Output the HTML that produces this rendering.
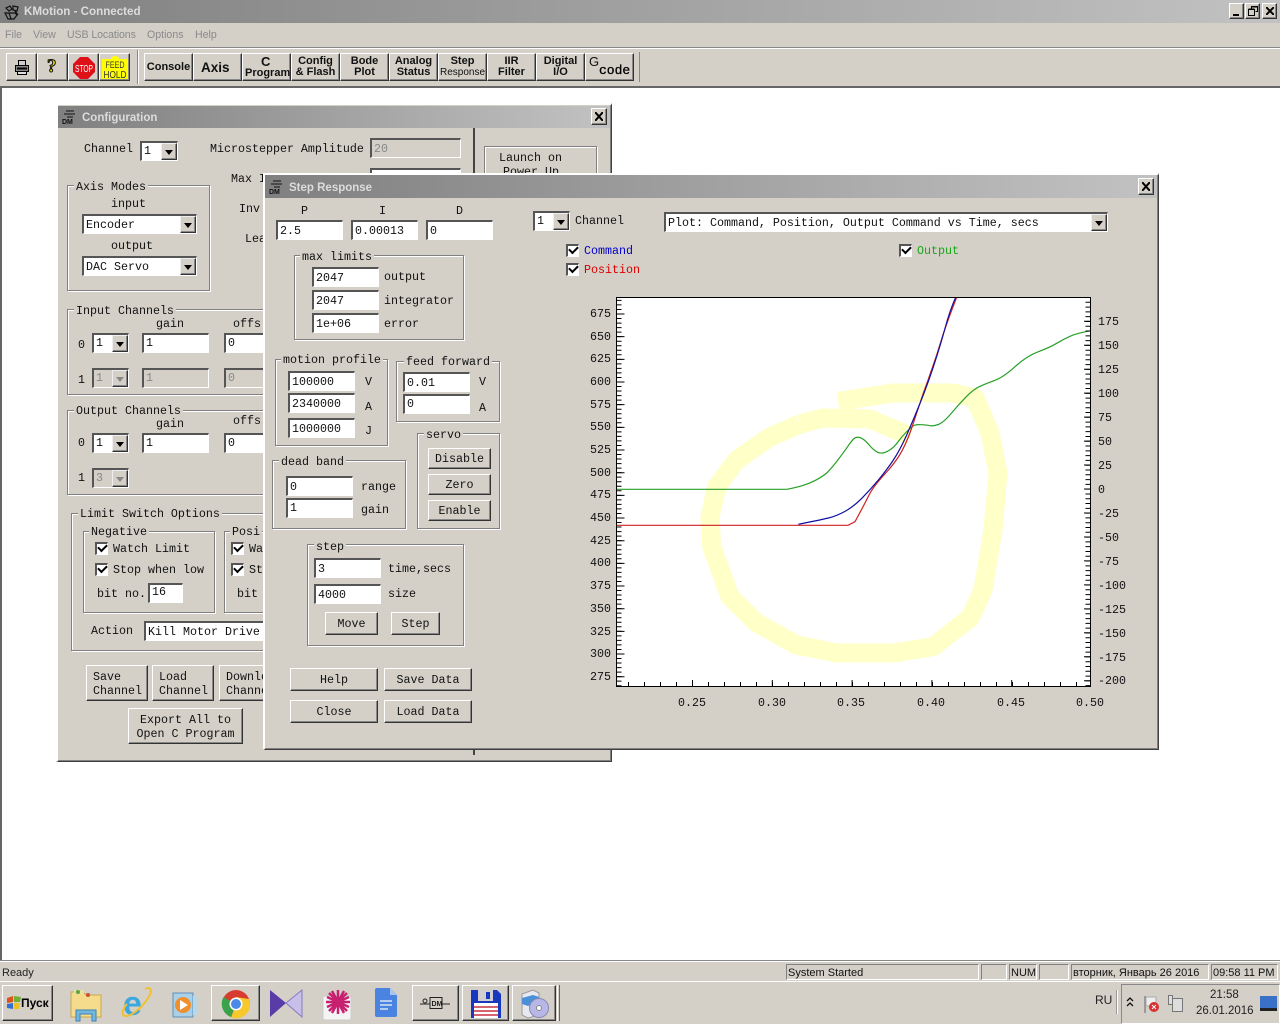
<!DOCTYPE html>
<html><head><meta charset="utf-8"><title>KMotion</title>
<style>
html,body{margin:0;padding:0}
body{width:1280px;height:1024px;position:relative;overflow:hidden;background:#d4d0c8;font:11.67px/14px "Liberation Mono","Courier New",monospace;color:#111}
*{box-sizing:border-box}
div,span,i,svg{position:absolute}
i{font-style:normal;white-space:pre}
.t{height:14px;margin-top:1px}
.e{background:#fff;border:solid;border-width:2px 1px 1px 2px;border-color:#555 #fff #fff #555;padding-left:2px;line-height:19px;white-space:pre;overflow:hidden}
.x{background:#d4d0c8;color:#888}
.c{background:#fff;border:solid;border-width:2px 1px 1px 2px;border-color:#555 #fff #fff #555;padding-left:2px;line-height:19px;white-space:pre}
.n{line-height:17px}
.c u{position:absolute;right:0;top:0;bottom:0;width:16px;background:#d4d0c8;border:1px solid;border-color:#eee #333 #333 #eee;box-shadow:inset -1px -1px #888}
.c u::after{content:"";position:absolute;left:3px;top:6px;border:4px solid transparent;border-top:5px solid #000;border-bottom:0}
.d{background:#d4d0c8;color:#888}
.d u::after{border-top-color:#888}
.b{background:#d4d0c8;border:1px solid;border-color:#fff #333 #333 #fff;box-shadow:inset -1px -1px #888;text-align:center;white-space:pre;display:flex;align-items:center;justify-content:center}
.g{border:1px solid #808080;box-shadow:1px 1px #fff,inset 1px 1px #fff}
.g>span{top:-7px;background:#d4d0c8;padding:0 2px;white-space:pre;line-height:14px}
.k{width:13px;height:13px;background:#fff;border:solid;border-width:2px 1px 1px 2px;border-color:#555 #fff #fff #555}
.k::after{content:"";position:absolute;left:1px;top:0px;width:7px;height:4px;border:solid #000;border-width:0 0 2px 2px;transform:rotate(-45deg)}
.w{background:#d4d0c8;border:solid;border-width:2px 1px 1px 2px;border-color:#fff #404040 #404040 #fff;box-shadow:inset -1px -1px #808080}
.tb{background:linear-gradient(90deg,#808080,#c2c2c2)}
.tt{font:bold 11.5px/14px "Liberation Sans",sans-serif;color:#dcdcdc;white-space:pre}
.q{font:bold 11px/11px "Liberation Sans",sans-serif;color:#111}
.s{background:#d4d0c8;border:1px solid;border-color:#808080 #fff #fff #808080;font:11px/16px "Liberation Sans",sans-serif;padding-left:1px;white-space:pre;color:#111}
.m{font:10.6px/14px "Liberation Sans",sans-serif;color:#8a8a8a}
.u{font:11.5px/14px "Liberation Sans",sans-serif;color:#222;white-space:pre}
.cl{background:#d4d0c8;border:1px solid;border-color:#fff #333 #333 #fff;box-shadow:inset -1px -1px #888}
.cl svg{left:3px;top:3px}
</style></head><body>

<!-- main title -->
<div class="tb" style="left:0;top:0;width:1280px;height:23px"></div>
<svg style="left:3px;top:3px" width="18" height="18" viewBox="0 0 18 18" fill="none" stroke="#111" stroke-width="1.200"><path d="M3 5l4-2 2 3-3 2zM10 3l5 1-1 4-4-1zM2 10h10l2 2-3 4H5zM6 10l2 6M12 8l3 4"/></svg>
<i class="tt" style="left:24px;top:5px;font-size:11.6px">KMotion - Connected</i>
<div class="cl" style="left:1229px;top:3px;width:15px;height:16px"><div style="left:3px;top:10px;width:6px;height:2px;background:#000"></div></div>
<div class="cl" style="left:1245px;top:3px;width:15px;height:16px"><svg style="left:2px;top:2px" width="10" height="10" fill="none" stroke="#000"><path d="M3.500 2.500V.5h6v5h-2M.5 3.500h6v6h-6zM.5 3h6M3.500 1h6"/></svg></div>
<div class="cl" style="left:1262px;top:3px;width:15px;height:16px"><svg width="8" height="8" stroke="#000" stroke-width="2"><path d="M0 0l8 8M8 0L0 8"/></svg></div>

<!-- menu -->
<i class="m" style="left:5px;top:28px">File</i>
<i class="m" style="left:33px;top:28px">View</i>
<i class="m" style="left:67px;top:28px;letter-spacing:-.1px">USB Locations</i>
<i class="m" style="left:147px;top:28px">Options</i>
<i class="m" style="left:195px;top:28px">Help</i>

<!-- toolbar -->
<div style="left:0;top:47px;width:1280px;height:2px;background:#fff;border-top:1px solid #888"></div>
<div class="b" style="left:6px;top:53px;width:31px;height:28px"><svg style="left:7px;top:5px" width="16" height="16" fill="#888" stroke="#000"><path d="M4.500 1.500h7v5h-7z" fill="#ccc"/><path d="M1.500 6.500h13v6h-13z"/><path d="M3.500 12.500h9v3h-9z" fill="#ddd"/><path d="M3 9.500h10" stroke-width="2"/></svg></div>
<div class="b" style="left:37px;top:53px;width:31px;height:28px"><i style="left:9px;top:2px;font:bold 19px/22px 'Liberation Serif',serif;color:#e8e000;-webkit-text-stroke:1px #111">?</i></div>
<div class="b" style="left:68px;top:53px;width:31px;height:28px"><svg style="left:4px;top:3px" width="22" height="22"><polygon points="7,0 15,0 22,7 22,15 15,22 7,22 0,15 0,7" fill="#e01018"/><text x="11" y="15" text-anchor="middle" font-family="Liberation Sans" font-size="10" fill="#fff" textLength="18" lengthAdjust="spacingAndGlyphs">STOP</text></svg></div>
<div class="b" style="left:99px;top:53px;width:31px;height:28px"><svg style="left:2px;top:2px" width="26" height="24"><rect x="0" y="3" width="26" height="20" fill="#ff0"/><ellipse cx="13" cy="3" rx="4" ry="3" fill="#ff0"/><text x="13" y="12" text-anchor="middle" font-family="Liberation Sans" font-size="9.500" fill="#333" textLength="19" lengthAdjust="spacingAndGlyphs">FEED</text><text x="13" y="22" text-anchor="middle" font-family="Liberation Sans" font-size="10.500" fill="#333" textLength="23" lengthAdjust="spacingAndGlyphs">HOLD</text></svg></div>
<div style="left:137px;top:50px;width:2px;height:34px;background:#888;border-right:1px solid #fff"></div>
<div class="b q" style="left:144px;top:53px;width:49px;height:28px">Console</div>
<div class="b q" style="left:193px;top:53px;width:49px;height:28px;font-size:13.500px;justify-content:flex-start;padding-left:7px">Axis</div>
<div class="b q" style="left:242px;top:53px;width:49px;height:28px"><i style="left:18px;top:1px;font:bold 13px/14px 'Liberation Sans',sans-serif">C</i><i style="left:2px;top:12px;font:bold 11px/14px 'Liberation Sans',sans-serif">Program</i></div>
<div class="b q" style="left:291px;top:53px;width:49px;height:28px">Config
&amp; Flash</div>
<div class="b q" style="left:340px;top:53px;width:49px;height:28px">Bode
Plot</div>
<div class="b q" style="left:389px;top:53px;width:49px;height:28px">Analog
Status</div>
<div class="b q" style="left:438px;top:53px;width:49px;height:28px"><span style="position:static">Step<br><span style="position:static;font-weight:normal;font-size:10px">Response</span></span></div>
<div class="b q" style="left:487px;top:53px;width:49px;height:28px">IIR
Filter</div>
<div class="b q" style="left:536px;top:53px;width:49px;height:28px">Digital
I/O</div>
<div class="b q" style="left:585px;top:53px;width:49px;height:28px"><i style="left:3px;top:0;font:13px/16px 'Liberation Sans',sans-serif">G</i><i style="left:13px;top:9px;font:13px/16px 'Liberation Mono',monospace;color:#000;-webkit-text-stroke:.3px #000">code</i></div>
<div style="left:639px;top:52px;width:1px;height:30px;background:#888"></div>

<!-- client -->
<div style="left:0;top:86px;width:1280px;height:875px;background:#fff;border-top:2px solid #666;border-left:2px solid #666"></div>

<!-- configuration window -->
<div class="w" style="left:56px;top:103px;width:556px;height:659px"></div>
<div class="tb" style="left:58px;top:106px;width:552px;height:22px"></div>
<svg style="left:62px;top:108px" width="15" height="17" fill="none" stroke="#111"><path d="M4 3h8M2 6h11M5 9h6"/><text x="0" y="16" font-family="Liberation Sans" font-size="7" font-weight="bold" fill="#111" stroke="none">DM</text></svg>
<i class="tt" style="left:82px;top:111px">Configuration</i>
<div class="cl" style="left:591px;top:108px;width:16px;height:17px"><svg width="8" height="9" stroke="#000" stroke-width="2"><path d="M0 0l8 9M8 0L0 9"/></svg></div>
<i class="t" style="left:84px;top:141px">Channel</i>
<div class="c n" style="left:140px;top:141px;width:38px;height:20px">1<u></u></div>
<i class="t" style="left:210px;top:141px">Microstepper Amplitude</i>
<div class="e x" style="left:370px;top:138px;width:91px;height:20px">20</div>
<div style="left:473px;top:128px;width:2px;height:627px;background:#444"></div>
<div class="g" style="left:484px;top:146px;width:113px;height:60px"></div>
<i class="t" style="left:499px;top:150px">Launch on</i>
<i class="t" style="left:503px;top:164px">Power Up</i>
<i class="t" style="left:231px;top:171px">Max I</i>
<div class="e" style="left:370px;top:168px;width:91px;height:20px"></div>
<i class="t" style="left:239px;top:201px">Inv</i>
<i class="t" style="left:245px;top:231px">Lea</i>

<div class="g" style="left:67px;top:185px;width:143px;height:106px"><span style="left:6px;top:-6px">Axis Modes</span></div>
<i class="t" style="left:111px;top:196px">input</i>
<div class="c" style="left:82px;top:214px;width:115px;height:20px">Encoder<u></u></div>
<i class="t" style="left:111px;top:238px">output</i>
<div class="c" style="left:82px;top:256px;width:115px;height:20px">DAC Servo<u></u></div>

<div class="g" style="left:67px;top:309px;width:210px;height:86px"><span style="left:6px;top:-6px">Input Channels</span></div>
<i class="t" style="left:156px;top:316px">gain</i>
<i class="t" style="left:233px;top:316px">offs</i>
<i class="t" style="left:78px;top:337px">0</i>
<div class="c n" style="left:92px;top:333px;width:37px;height:20px">1<u></u></div>
<div class="e" style="left:142px;top:333px;width:67px;height:20px;line-height:17px">1</div>
<div class="e" style="left:224px;top:333px;width:60px;height:20px;line-height:17px">0</div>
<i class="t" style="left:78px;top:372px">1</i>
<div class="c d n" style="left:92px;top:368px;width:37px;height:20px">1<u></u></div>
<div class="e x" style="left:142px;top:368px;width:67px;height:20px;line-height:17px">1</div>
<div class="e x" style="left:224px;top:368px;width:60px;height:20px;line-height:17px">0</div>

<div class="g" style="left:67px;top:410px;width:210px;height:85px"><span style="left:6px">Output Channels</span></div>
<i class="t" style="left:156px;top:416px">gain</i>
<i class="t" style="left:233px;top:413px">offs</i>
<i class="t" style="left:78px;top:435px">0</i>
<div class="c n" style="left:92px;top:433px;width:37px;height:20px">1<u></u></div>
<div class="e" style="left:142px;top:433px;width:67px;height:20px;line-height:17px">1</div>
<div class="e" style="left:224px;top:433px;width:60px;height:20px;line-height:17px">0</div>
<i class="t" style="left:78px;top:470px">1</i>
<div class="c d n" style="left:92px;top:468px;width:37px;height:20px">3<u></u></div>

<div class="g" style="left:71px;top:513px;width:210px;height:138px"><span style="left:6px">Limit Switch Options</span></div>
<div class="g" style="left:83px;top:531px;width:132px;height:82px"><span style="left:5px">Negative</span></div>
<div class="k" style="left:95px;top:542px"></div>
<i class="t" style="left:113px;top:541px">Watch Limit</i>
<div class="k" style="left:95px;top:563px"></div>
<i class="t" style="left:113px;top:562px">Stop when low</i>
<i class="t" style="left:97px;top:586px">bit no.</i>
<div class="e" style="left:148px;top:583px;width:35px;height:20px;line-height:15px">16</div>
<div class="g" style="left:224px;top:531px;width:60px;height:82px"><span style="left:5px">Posi</span></div>
<div class="k" style="left:231px;top:542px"></div>
<i class="t" style="left:249px;top:541px">Wa</i>
<div class="k" style="left:231px;top:563px"></div>
<i class="t" style="left:249px;top:562px">St</i>
<i class="t" style="left:237px;top:586px">bit</i>
<i class="t" style="left:91px;top:623px">Action</i>
<div class="c" style="left:144px;top:621px;width:140px;height:20px">Kill Motor Drive</div>
<div class="b" style="left:86px;top:665px;width:62px;height:36px;justify-content:flex-start;padding:2px 0 0 6px;text-align:left">Save
Channel</div>
<div class="b" style="left:152px;top:665px;width:62px;height:36px;justify-content:flex-start;padding:2px 0 0 6px;text-align:left">Load
Channel</div>
<div class="b" style="left:219px;top:665px;width:62px;height:36px;justify-content:flex-start;padding:2px 0 0 6px;text-align:left">Download
Channel</div>
<div class="b" style="left:128px;top:708px;width:115px;height:36px;padding-top:2px">Export All to
Open C Program</div>

<!-- step response window -->
<div class="w" style="left:263px;top:173px;width:896px;height:577px"></div>
<div class="tb" style="left:265px;top:175px;width:892px;height:23px"></div>
<svg style="left:269px;top:178px" width="15" height="17" fill="none" stroke="#111"><path d="M4 3h8M2 6h11M5 9h6"/><text x="0" y="16" font-family="Liberation Sans" font-size="7" font-weight="bold" fill="#111" stroke="none">DM</text></svg>
<i class="tt" style="left:289px;top:181px">Step Response</i>
<div class="cl" style="left:1138px;top:178px;width:16px;height:17px"><svg width="8" height="9" stroke="#000" stroke-width="2"><path d="M0 0l8 9M8 0L0 9"/></svg></div>

<i class="t" style="left:301px;top:203px">P</i>
<i class="t" style="left:379px;top:203px">I</i>
<i class="t" style="left:456px;top:203px">D</i>
<div class="e" style="left:276px;top:220px;width:67px;height:20px">2.5</div>
<div class="e" style="left:351px;top:220px;width:67px;height:20px">0.00013</div>
<div class="e" style="left:426px;top:220px;width:67px;height:20px">0</div>

<div class="g" style="left:294px;top:255px;width:170px;height:85px"><span style="left:5px;top:-6px">max limits</span></div>
<div class="e" style="left:312px;top:267px;width:67px;height:20px">2047</div>
<div class="e" style="left:312px;top:290px;width:67px;height:20px">2047</div>
<div class="e" style="left:312px;top:313px;width:67px;height:20px">1e+06</div>
<i class="t" style="left:384px;top:269px">output</i>
<i class="t" style="left:384px;top:293px">integrator</i>
<i class="t" style="left:384px;top:316px">error</i>

<div class="g" style="left:275px;top:359px;width:113px;height:87px"><span style="left:5px;padding:0 2px">motion profile</span></div>
<div class="e" style="left:288px;top:371px;width:67px;height:20px">100000</div>
<div class="e" style="left:288px;top:393px;width:67px;height:20px">2340000</div>
<div class="e" style="left:288px;top:418px;width:67px;height:20px">1000000</div>
<i class="t" style="left:365px;top:374px">V</i>
<i class="t" style="left:365px;top:399px">A</i>
<i class="t" style="left:365px;top:423px">J</i>

<div class="g" style="left:396px;top:361px;width:104px;height:61px"><span style="left:7px">feed forward</span></div>
<div class="e" style="left:403px;top:372px;width:67px;height:20px">0.01</div>
<div class="e" style="left:403px;top:394px;width:67px;height:20px;line-height:17px">0</div>
<i class="t" style="left:479px;top:374px">V</i>
<i class="t" style="left:479px;top:400px">A</i>

<div class="g" style="left:417px;top:433px;width:83px;height:96px"><span style="left:6px;top:-6px">servo</span></div>
<div class="b" style="left:428px;top:448px;width:63px;height:21px">Disable</div>
<div class="b" style="left:428px;top:474px;width:63px;height:21px">Zero</div>
<div class="b" style="left:428px;top:500px;width:63px;height:21px">Enable</div>

<div class="g" style="left:272px;top:460px;width:134px;height:69px"><span style="left:6px;top:-6px">dead band</span></div>
<div class="e" style="left:286px;top:476px;width:67px;height:20px">0</div>
<div class="e" style="left:286px;top:498px;width:67px;height:20px;line-height:17px">1</div>
<i class="t" style="left:361px;top:479px">range</i>
<i class="t" style="left:361px;top:502px">gain</i>

<div class="g" style="left:307px;top:544px;width:157px;height:102px"><span style="left:6px;top:-5px">step</span></div>
<div class="e" style="left:314px;top:558px;width:67px;height:20px">3</div>
<div class="e" style="left:314px;top:584px;width:67px;height:20px">4000</div>
<i class="t" style="left:388px;top:561px">time,secs</i>
<i class="t" style="left:388px;top:586px">size</i>
<div class="b" style="left:325px;top:612px;width:53px;height:23px">Move</div>
<div class="b" style="left:391px;top:612px;width:49px;height:23px">Step</div>

<div class="b" style="left:290px;top:668px;width:88px;height:23px">Help</div>
<div class="b" style="left:384px;top:668px;width:88px;height:23px">Save Data</div>
<div class="b" style="left:290px;top:700px;width:88px;height:23px">Close</div>
<div class="b" style="left:384px;top:700px;width:88px;height:23px">Load Data</div>

<div class="c n" style="left:533px;top:211px;width:37px;height:20px">1<u></u></div>
<i class="t" style="left:575px;top:213px">Channel</i>
<div class="c" style="left:664px;top:212px;width:444px;height:20px">Plot: Command, Position, Output Command vs Time, secs<u></u></div>
<div class="k" style="left:566px;top:244px"></div>
<i class="t" style="left:584px;top:243px;color:#0000c8">Command</i>
<div class="k" style="left:566px;top:263px"></div>
<i class="t" style="left:584px;top:262px;color:#d80000">Position</i>
<div class="k" style="left:899px;top:244px"></div>
<i class="t" style="left:917px;top:243px;color:#18a818">Output</i>

<!-- plot -->
<svg style="left:0;top:0" width="1280" height="1024" fill="none">
<rect x="616.500" y="297.500" width="474" height="389" fill="#fff"/>
<path d="M838 401.500L893 393L953 393L975 398L990 433L998 473L993 530L983 590L970 618L933 646.700L893 653L836.700 653L796.700 645L756.700 623L730 596.700L711.700 546.700L710 516.700L716.700 487L736.700 460L770 437L800 424" stroke="#ffffc8" stroke-width="19" stroke-linejoin="round"/>
<path d="M800 424L823 418L870 419L910 436" stroke="#ffffc8" stroke-width="19" stroke-linejoin="round"/>
<path d="M616 489.300H787Q797 487.300 803.300 485.300Q810 483.300 816.700 479.700Q823.300 476 826.700 473Q830 470 836.700 461.500Q843.300 453 848.300 445.700Q853.300 438.300 855.800 437.500Q858.300 436.700 861.700 438.300Q865 440 869.200 445Q873.300 450 877.500 452.200Q881.700 454.300 887.500 451.300Q893.300 448.300 897.500 442.500Q901.700 436.700 905.900 432.500Q910 428.300 912.500 426.300Q915 424.300 920.900 424.700Q926.700 425 930 425.700Q933.300 426.300 938.300 424.500Q943.300 422.700 950.800 413.900Q958.300 405 965.800 397.200Q973.300 389.300 980 386.300Q986.700 383.300 995 380.300Q1003.300 377.300 1015 366.700Q1026.700 356 1038.400 351.700Q1050 347.300 1056.700 343.300Q1063.300 339.300 1070 336.300Q1076.700 333.300 1090.700 330.700" stroke="#28a028" stroke-width="1.200"/>
<path d="M616 525.300H848L855 521.700Q865 503.300 869 495Q873.300 486.700 883 476Q893.300 465 899 456Q905 446.700 911 430Q916.700 413.300 923 394Q930 375 937 354Q943.300 333.300 947.500 321.700Q951.700 310 956.700 297.300" stroke="#d02020" stroke-width="1.200"/>
<path d="M798.300 524.300Q820 520 828.400 518Q836.700 516 845 511.400Q853.300 506.700 861.700 498.400Q870 490 878.400 480Q886.700 470 893.400 460Q900 450 906.700 435Q913.300 420 920 403.400Q926.700 386.700 933.400 366.700Q940 346.700 945 328.400Q950 310 955.700 297.300" stroke="#1010a0" stroke-width="1.200"/>
<rect x="616.500" y="297.500" width="474" height="389" stroke="#000"/>
<g stroke="#000">
<path d="M619 299.900V686" stroke-width="5" stroke-dasharray="1 3.533"/>
<path d="M620.500 313.500V680" stroke-width="8" stroke-dasharray="1 21.670"/>
<path d="M1088 297V686" stroke-width="5" stroke-dasharray="1 3.792"/>
<path d="M1087 320.800V686" stroke-width="6" stroke-dasharray="1 22.960"/>
<path d="M628 684H1090" stroke-width="4" stroke-dasharray="1 15"/>
<path d="M692 683H1091" stroke-width="6" stroke-dasharray="1 78.800"/>
</g>
</svg>
<i class="t" style="left:590px;top:306px">675</i>
<i class="t" style="left:590px;top:329px">650</i>
<i class="t" style="left:590px;top:351px">625</i>
<i class="t" style="left:590px;top:374px">600</i>
<i class="t" style="left:590px;top:397px">575</i>
<i class="t" style="left:590px;top:419px">550</i>
<i class="t" style="left:590px;top:442px">525</i>
<i class="t" style="left:590px;top:465px">500</i>
<i class="t" style="left:590px;top:487px">475</i>
<i class="t" style="left:590px;top:510px">450</i>
<i class="t" style="left:590px;top:533px">425</i>
<i class="t" style="left:590px;top:555px">400</i>
<i class="t" style="left:590px;top:578px">375</i>
<i class="t" style="left:590px;top:601px">350</i>
<i class="t" style="left:590px;top:624px">325</i>
<i class="t" style="left:590px;top:646px">300</i>
<i class="t" style="left:590px;top:669px">275</i>
<i class="t" style="left:1098px;top:314px">175</i>
<i class="t" style="left:1098px;top:338px">150</i>
<i class="t" style="left:1098px;top:362px">125</i>
<i class="t" style="left:1098px;top:386px">100</i>
<i class="t" style="left:1098px;top:410px">75</i>
<i class="t" style="left:1098px;top:434px">50</i>
<i class="t" style="left:1098px;top:458px">25</i>
<i class="t" style="left:1098px;top:482px">0</i>
<i class="t" style="left:1098px;top:506px">-25</i>
<i class="t" style="left:1098px;top:530px">-50</i>
<i class="t" style="left:1098px;top:554px">-75</i>
<i class="t" style="left:1098px;top:578px">-100</i>
<i class="t" style="left:1098px;top:602px">-125</i>
<i class="t" style="left:1098px;top:626px">-150</i>
<i class="t" style="left:1098px;top:650px">-175</i>
<i class="t" style="left:1098px;top:673px">-200</i>
<i class="t" style="left:678px;top:695px">0.25</i>
<i class="t" style="left:758px;top:695px">0.30</i>
<i class="t" style="left:837px;top:695px">0.35</i>
<i class="t" style="left:917px;top:695px">0.40</i>
<i class="t" style="left:997px;top:695px">0.45</i>
<i class="t" style="left:1076px;top:695px">0.50</i>

<!-- status bar -->
<div style="left:0;top:960px;width:1280px;height:2px;background:#fff;border-top:1px solid #888"></div>
<i class="u" style="left:2px;top:966px;font-size:11px">Ready</i>
<div class="s" style="left:786px;top:964px;width:193px;height:16px">System Started</div>
<div class="s" style="left:981px;top:964px;width:26px;height:16px"></div>
<div class="s" style="left:1009px;top:964px;width:28px;height:16px">NUM</div>
<div class="s" style="left:1039px;top:964px;width:30px;height:16px"></div>
<div class="s" style="left:1071px;top:964px;width:138px;height:16px">вторник, Январь 26 2016</div>
<div class="s" style="left:1211px;top:964px;width:67px;height:16px">09:58 11 PM</div>
<div style="left:0;top:981px;width:1280px;height:1px;background:#fff"></div>

<!-- taskbar -->
<div class="b" style="left:2px;top:985px;width:51px;height:36px"><svg style="left:3px;top:9px" width="16" height="16"><path d="M1 3l6-2v6l-6 1z" fill="#e05020"/><path d="M8 1l7 1-1 5-6 0z" fill="#70b030"/><path d="M1 9l6-1v6l-6-1z" fill="#3070d0"/><path d="M8 8h6l-1 6-5 0z" fill="#f0c020"/></svg><i style="left:18px;top:10px;font:bold 12px/14px 'Liberation Sans','Noto Sans CJK SC',sans-serif;color:#000">Пуск</i></div>
<svg style="left:68px;top:986px" width="36" height="36"><path d="M3 6h12l3 3h15v22H3z" fill="#f4dc8c" stroke="#c8a850"/><rect x="6" y="4" width="10" height="4" fill="#e8e0a0"/><circle cx="10" cy="6" r="2" fill="#60a040"/><circle cx="20" cy="9" r="2" fill="#d05030"/><path d="M8 24h20v11h-4V28H12v7H8z" fill="#70b8e0" stroke="#4080b0"/></svg>
<svg style="left:120px;top:986px" width="34" height="34" fill="none"><text x="3" y="29" font-family="Liberation Sans" font-size="34" font-weight="bold" fill="#3ca8e0">e</text><path d="M25 3c6-3 8 2 3 9C22 22 10 31 5 30c-4-1-2-8 2-12" stroke="#f0c030" stroke-width="2"/></svg>
<svg style="left:171px;top:991px" width="28" height="28"><rect x="2" y="2" width="20" height="24" fill="#a8d0e8" stroke="#6090b8"/><rect x="22" y="5" width="4" height="19" fill="#b8d8e8"/><circle cx="12" cy="14" r="8" fill="#f0902c"/><path d="M9 9l8 5-8 5z" fill="#fff"/></svg>
<div class="b" style="left:211px;top:985px;width:49px;height:36px"><svg style="left:9px;top:3px" width="30" height="30" viewBox="0 0 30 30"><circle cx="15" cy="15" r="14" fill="#d83c30"/><path d="M15 15L2.500 8A14 14 0 0 0 10 28z" fill="#3aa24a"/><path d="M15 15L10 28.500A14 14 0 0 0 28 10L15 8z" fill="#f6c82c"/><circle cx="15" cy="15" r="6.500" fill="#fff"/><circle cx="15" cy="15" r="5" fill="#4a8ae8"/></svg></div>
<svg style="left:268px;top:987px" width="36" height="32"><path d="M2 3l16 13L2 30z" fill="#5a3ca8"/><path d="M34 3L18 16l16 14z" fill="#c8c0e8" stroke="#8878c0"/></svg>
<svg style="left:320px;top:987px" width="36" height="34"><rect x="3" y="9" width="28" height="24" rx="2" fill="#f4f4f4" stroke="#ccc"/><g stroke="#c82070" stroke-width="2.500"><path d="M18 3v24M6 15h24M9 6l18 18M27 6L9 24M12 4l12 22M24 4L12 26M7 10l22 10M29 10L7 20"/></g></svg>
<svg style="left:374px;top:987px" width="24" height="32"><path d="M1 3a2 2 0 0 1 2-2h13l7 7v20a2 2 0 0 1-2 2H3a2 2 0 0 1-2-2z" fill="#4a84e0"/><path d="M16 1l7 7h-7z" fill="#a8c4f0"/><path d="M6 14h12M6 18h12M6 22h8" stroke="#d8e4f8" stroke-width="1.500"/></svg>
<div class="b" style="left:412px;top:985px;width:47px;height:36px"><svg style="left:7px;top:8px" width="32" height="20" fill="none" stroke="#222"><circle cx="5" cy="7" r="2"/><path d="M10 3.500h12v11H10zM0 10h10M22 10h8"/><text x="11.500" y="12" font-family="Liberation Sans" font-size="7" font-weight="bold" fill="#222" stroke="none">DM</text></svg></div>
<div class="b" style="left:462px;top:985px;width:47px;height:36px"><svg style="left:6px;top:2px" width="34" height="32"><path d="M2 2h26l4 4v24H2z" fill="#1838c0"/><rect x="9" y="2" width="15" height="11" fill="#d0d0d0"/><rect x="17" y="4" width="4" height="7" fill="#1838c0"/><rect x="5" y="15" width="24" height="15" fill="#fff"/><path d="M5 19h24M5 23h24M5 27h24" stroke="#c83040" stroke-width="1.500"/></svg></div>
<div class="b" style="left:512px;top:985px;width:44px;height:36px"><svg style="left:6px;top:3px" width="32" height="30"><path d="M3 5l11-4 6 3v22l-11 3-6-3z" fill="#e8e8f0" stroke="#999"/><path d="M3 9l11-3 6 2v6L9 17l-6-2z" fill="#4a90d8"/><circle cx="20" cy="19" r="9.500" fill="#b8b8e8" stroke="#8888b0"/><circle cx="20" cy="19" r="2.500" fill="#fff" stroke="#888"/></svg></div>
<div style="left:557px;top:985px;width:3px;height:36px;border-left:1px solid #fff;border-right:1px solid #666"></div>

<i class="u" style="left:1095px;top:993px;font-size:12px">RU</i>
<div style="left:1116px;top:990px;width:2px;height:24px;background:#999;border-right:1px solid #fff"></div>
<div style="left:1121px;top:984px;width:159px;height:40px;border:1px solid;border-color:#888 #fff #fff #888"></div>
<svg style="left:1126px;top:996px" width="8" height="12" fill="none" stroke="#111" stroke-width="1.300"><path d="M1 5l3-3 3 3M1 10l3-3 3 3"/></svg>
<svg style="left:1142px;top:994px" width="18" height="20"><path d="M3 2v17" stroke="#888" stroke-width="1.500"/><path d="M4 3h10v9H4z" fill="#eee" stroke="#aaa"/><circle cx="12" cy="13" r="5" fill="#d83030"/><path d="M10 11l4 4M14 11l-4 4" stroke="#fff"/></svg>
<svg style="left:1167px;top:994px" width="16" height="20" fill="#ddd" stroke="#777"><rect x="5.500" y="4.500" width="10" height="13"/><rect x="1.500" y="1.500" width="4" height="9"/></svg>
<i class="u" style="left:1210px;top:988px">21:58</i>
<i class="u" style="left:1196px;top:1004px">26.01.2016</i>
<svg style="left:1260px;top:996px" width="17" height="17"><rect width="17" height="12" fill="#3a70c8"/><rect y="12" width="17" height="3" fill="#222"/></svg>
</body></html>
